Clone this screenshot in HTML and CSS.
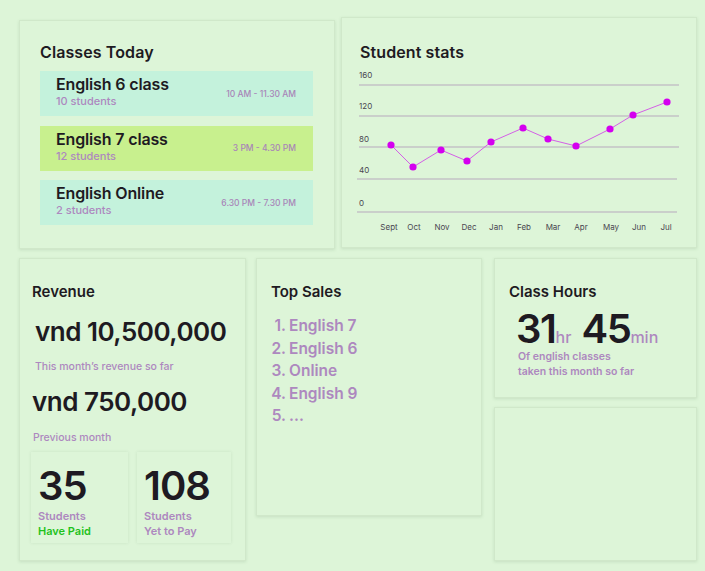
FILE: index.html
```html
<!DOCTYPE html>
<html>
<head>
<meta charset="utf-8">
<link rel="stylesheet" href="styles.css">
</head>
<body>
<div class="page">
  <div class="row top">
    <section class="card classes">
      <h2 class="title">Classes Today</h2>
      <div class="cls mint">
        <div><div class="cls-name">English 6 class</div><div class="cls-sub">10 students</div></div>
        <div class="cls-time">10 AM - 11.30 AM</div>
      </div>
      <div class="cls lime">
        <div><div class="cls-name">English 7 class</div><div class="cls-sub">12 students</div></div>
        <div class="cls-time">3 PM - 4.30 PM</div>
      </div>
      <div class="cls mint">
        <div><div class="cls-name">English Online</div><div class="cls-sub">2 students</div></div>
        <div class="cls-time">6.30 PM - 7.30 PM</div>
      </div>
    </section>
    <section class="card stats">
      <h2 class="title">Student stats</h2>
      <svg class="chart" width="330" height="170" viewBox="0 0 330 170">
        <g class="grid">
          <line x1="4" y1="17" x2="324" y2="17"/>
          <line x1="4" y1="48" x2="324" y2="48"/>
          <line x1="4" y1="79" x2="324" y2="79"/>
          <line x1="2" y1="111" x2="322" y2="111"/>
          <line x1="2" y1="144" x2="322" y2="144"/>
        </g>
        <g class="ylab">
          <text x="4" y="10">160</text>
          <text x="4" y="41">120</text>
          <text x="4" y="74">80</text>
          <text x="4" y="105">40</text>
          <text x="4" y="138">0</text>
        </g>
        <g class="xlab">
          <text x="34" y="162">Sept</text>
          <text x="59" y="162">Oct</text>
          <text x="87" y="162">Nov</text>
          <text x="114" y="162">Dec</text>
          <text x="141" y="162">Jan</text>
          <text x="169" y="162">Feb</text>
          <text x="198" y="162">Mar</text>
          <text x="226" y="162">Apr</text>
          <text x="256" y="162">May</text>
          <text x="284" y="162">Jun</text>
          <text x="311" y="162">Jul</text>
        </g>
        <polyline class="line" points="36,77 58,99 86,82 112,93 136,74 168,60 193,71 221,78 255,61 278,47 312,34"/>
        <g class="dots">
          <circle cx="36" cy="77" r="3.6"/>
          <circle cx="58" cy="99" r="3.6"/>
          <circle cx="86" cy="82" r="3.6"/>
          <circle cx="112" cy="93" r="3.6"/>
          <circle cx="136" cy="74" r="3.6"/>
          <circle cx="168" cy="60" r="3.6"/>
          <circle cx="193" cy="71" r="3.6"/>
          <circle cx="221" cy="78" r="3.6"/>
          <circle cx="255" cy="61" r="3.6"/>
          <circle cx="278" cy="47" r="3.6"/>
          <circle cx="312" cy="34" r="3.6"/>
        </g>
      </svg>
    </section>
  </div>
  <div class="row bottom">
    <section class="card revenue">
      <h3 class="subtitle">Revenue</h3>
      <div class="amount a1">vnd 10,500,000</div>
      <div class="note n1">This month’s revenue so far</div>
      <div class="amount a2">vnd 750,000</div>
      <div class="note n2">Previous month</div>
      <div class="mini-row">
        <div class="mini">
          <div class="mini-num">35</div>
          <div class="mini-lab">Students</div>
          <div class="mini-lab paid">Have Paid</div>
        </div>
        <div class="mini">
          <div class="mini-num">108</div>
          <div class="mini-lab">Students</div>
          <div class="mini-lab">Yet to Pay</div>
        </div>
      </div>
    </section>
    <section class="card sales">
      <h3 class="subtitle">Top Sales</h3>
      <ol class="sales-list">
        <li><span class="idx">1.</span>English 7</li>
        <li><span class="idx">2.</span>English 6</li>
        <li><span class="idx">3.</span>Online</li>
        <li><span class="idx">4.</span>English 9</li>
        <li><span class="idx">5.</span>...</li>
      </ol>
    </section>
    <div class="col">
      <section class="card hours">
        <h3 class="subtitle">Class Hours</h3>
        <div class="hrs"><span class="big">31</span><span class="unit">hr</span><span class="big second">45</span><span class="unit">min</span></div>
        <div class="hrs-note">Of english classes<br>taken this month so far</div>
      </section>
      <section class="card empty"></section>
    </div>
  </div>
</div>
</body>
</html>
```

FILE: styles.css
```css
* { box-sizing: border-box; }
html, body { margin: 0; padding: 0; }
body {
  background: #ddf5d8;
  font-family: "Inter", "Open Sans", sans-serif;
  color: #1e1a22;
  width: 705px;
  height: 571px;
  overflow: hidden;
}
.page { padding: 17px 8px 0 19px; }
.row { display: flex; align-items: flex-start; }
.top { gap: 6px; }
.bottom { margin-top: 9px; }
.card {
  background: #ddf5d8;
  border: 1px solid #d0e8ca;
  box-shadow: 0 1px 3px rgba(60, 100, 60, 0.14);
}
.title {
  margin: 0;
  font-size: 16px;
  font-weight: 600;
  letter-spacing: 0.1px;
  line-height: 20px;
}
.subtitle {
  margin: 0;
  font-size: 15px;
  font-weight: 600;
  line-height: 20px;
}

/* classes */
.classes {
  width: 316px;
  height: 229px;
  margin-top: 3px;
  padding: 21px 21px 0 20px;
}
.classes .title { margin-bottom: 9px; }
.cls {
  height: 45px;
  display: flex;
  justify-content: space-between;
  align-items: center;
  padding: 0 17px 4px 16px;
  margin-bottom: 9.5px;
}
.mint { background: #c4f2dc; }
.lime { background: #c8f08e; }
.cls-name { font-size: 16px; font-weight: 600; line-height: 19px; letter-spacing: -0.15px; }
.cls-sub { font-size: 11px; font-weight: 500; color: #ad88bf; line-height: 14px; }
.cls-time { font-size: 8.5px; font-weight: 500; color: #a885b8; margin-top: 4px; }

/* stats */
.stats {
  width: 356px;
  height: 231px;
  padding: 24px 0 0 18px;
}
.chart { display: block; margin: 6px 0 0 -5px; }
.grid line { stroke: #b7a9bd; stroke-width: 1; }
.ylab text { font-size: 8px; fill: #4a4650; }
.xlab text { font-size: 8px; fill: #4a4650; text-anchor: middle; }
.line { fill: none; stroke: #d45fe6; stroke-width: 1; }
.dots circle { fill: #d400ef; }

/* revenue */
.revenue {
  width: 227px;
  height: 303px;
  padding: 23px 0 0 12px;
}
.amount { font-size: 26px; font-weight: 600; line-height: 32px; letter-spacing: -0.5px; }
.a1 { margin: 14px 0 0 3px; }
.note { font-size: 10.5px; font-weight: 500; color: #ad88bf; line-height: 14px; }
.n1 { margin: 12px 0 0 3px; }
.a2 { margin-top: 12px; }
.n2 { margin: 13px 0 0 1px; }
.mini-row { display: flex; gap: 9px; margin: 7px 0 0 -1px; }
.mini {
  width: 97px;
  height: 91px;
  padding: 10px 0 0 7px;
  box-shadow: 0 0 3px rgba(60, 100, 60, 0.12);
}
.mini + .mini { width: 94px; }
.mini-num { font-size: 40px; font-weight: 600; line-height: 47px; letter-spacing: -1px; }
.mini-lab { font-size: 11px; font-weight: 600; color: #ad88bf; line-height: 15px; }
.paid { color: #1fc21c; }

/* sales */
.sales {
  width: 226px;
  height: 258px;
  margin-left: 10px;
  padding: 23px 0 0 14px;
}
.sales-list {
  list-style: none;
  margin: 13px 0 0 0;
  padding: 0;
}
.sales-list li {
  font-size: 15.5px;
  font-weight: 600;
  color: #ad88bf;
  line-height: 22.5px;
}
.idx { display: inline-block; width: 15px; text-align: right; margin-right: 3px; }

/* col 3 */
.col { display: flex; flex-direction: column; gap: 9px; margin-left: 12px; }
.hours {
  width: 203px;
  height: 140px;
  padding: 23px 0 0 14px;
}
.hrs { margin: 6px 0 0 7px; display: flex; align-items: baseline; }
.big { font-size: 40px; font-weight: 600; line-height: 42px; letter-spacing: -1.4px; }
.second { margin-left: 10px; }
.unit { font-size: 16px; font-weight: 500; color: #ad88bf; }
.hrs-note { margin: -1px 0 0 9px; font-size: 10.5px; font-weight: 600; color: #ad88bf; line-height: 15px; }
.empty { width: 203px; height: 154px; }
```
